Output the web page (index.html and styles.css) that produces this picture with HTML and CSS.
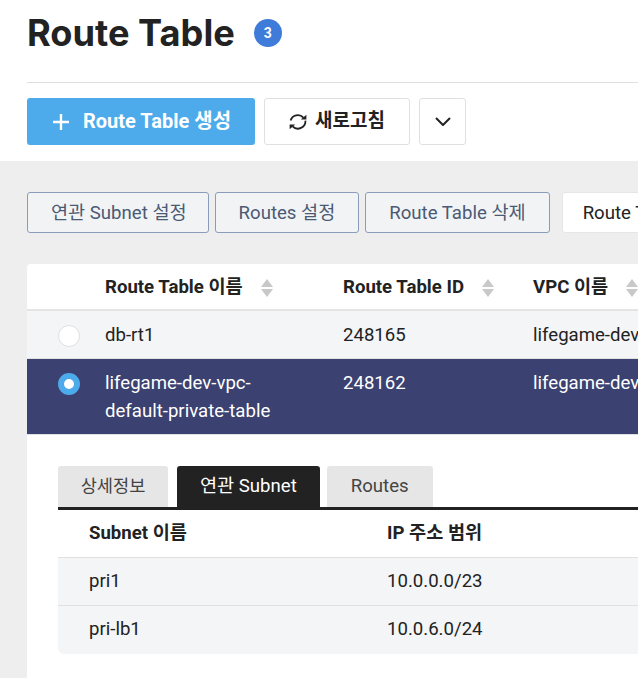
FILE: index.html
```html
<!DOCTYPE html>
<html lang="ko">
<head>
  <meta charset="UTF-8">
  <meta name="viewport" content="width=device-width, initial-scale=1.0">
  <title>Route Table</title>
  <link rel="stylesheet" href="styles.css">
</head>
<body>
  <!-- Page header -->
  <div class="page-header">
    <div class="title-row">
      <h1 class="page-title">Route Table</h1>
      <span class="count-badge">3</span>
    </div>
    <div class="toolbar">
      <button class="create-button">
        <svg class="plus-icon" width="18" height="18" viewBox="0 0 18 18"><path d="M9 1v16M1 9h16" fill="none" stroke="#fff" stroke-width="2.4"/></svg>
        Route Table 생성
      </button>
      <button class="refresh-button">
        <svg width="18" height="18" viewBox="0 0 18 18"><path d="M1.6 7.6A7.5 7.5 0 0 1 14.4 4.6" fill="none" stroke="#222" stroke-width="1.8"/><path d="M16.4 7.6A7.5 7.5 0 0 1 3.6 13.4" fill="none" stroke="#222" stroke-width="1.8"/><path d="M11.8 6.6h5.6V1.8z" fill="#222"/><path d="M6.2 11.4H.6v4.8z" fill="#222"/></svg>
        새로고침
      </button>
      <button class="more-button">
        <svg width="16" height="9" viewBox="0 0 16 9"><path d="M1 1l7 7 7-7" fill="none" stroke="#222" stroke-width="2"/></svg>
      </button>
    </div>
  </div>

  <!-- Content -->
  <div class="content">
    <div class="actions">
      <button class="action-button action-first">연관 Subnet 설정</button>
      <button class="action-button">Routes 설정</button>
      <button class="action-button">Route Table 삭제</button>
      <button class="action-button action-white">Route Table 이름 변경</button>
    </div>

    <div class="card">
      <table class="route-table">
        <colgroup>
          <col class="col-radio"><col class="col-name"><col class="col-id"><col class="col-vpc">
        </colgroup>
        <thead>
          <tr>
            <th></th>
            <th>Route Table 이름<span class="sort"></span></th>
            <th>Route Table ID<span class="sort"></span></th>
            <th>VPC 이름<span class="sort"></span></th>
          </tr>
        </thead>
        <tbody>
          <tr>
            <td><span class="radio"></span></td>
            <td>db-rt1</td>
            <td>248165</td>
            <td>lifegame-dev-vpc</td>
          </tr>
          <tr class="selected">
            <td><span class="radio radio-on"></span></td>
            <td>lifegame-dev-vpc-<br>default-private-table</td>
            <td>248162</td>
            <td>lifegame-dev-vpc</td>
          </tr>
        </tbody>
      </table>

      <div class="detail">
        <div class="tabs">
          <div class="tab tab-first">상세정보</div>
          <div class="tab tab-active">연관 Subnet</div>
          <div class="tab">Routes</div>
        </div>
        <table class="subnet-table">
          <colgroup><col class="col-subnet"><col class="col-ip"></colgroup>
          <thead>
            <tr><th>Subnet 이름</th><th>IP 주소 범위</th></tr>
          </thead>
          <tbody>
            <tr><td>pri1</td><td>10.0.0.0/23</td></tr>
            <tr><td>pri-lb1</td><td>10.0.6.0/24</td></tr>
          </tbody>
        </table>
      </div>
    </div>
  </div>
</body>
</html>
```

FILE: styles.css
```css
body {
  font-family: Roboto, "Noto Sans CJK KR", sans-serif;
  margin: 0;
  width: 638px;
  height: 678px;
  overflow: hidden;
  background-color: #eeeeee;
  color: #222;
}
button {
  font-family: inherit;
  cursor: pointer;
}
.page-header {
  background-color: #fff;
  height: 161px;
  padding-left: 27px;
  box-sizing: border-box;
}
.title-row {
  display: flex;
  align-items: center;
  height: 82px;
  border-bottom: 1px solid #e0e0e0;
  margin-bottom: 15px;
}
.page-title {
  font-family: Inter, sans-serif;
  font-size: 36.2px;
  font-weight: 700;
  margin: -16px 0 0;
}
.count-badge {
  width: 28px;
  height: 28px;
  margin: -16px 0 0 19px;
  border-radius: 50%;
  background-color: #3f7bd9;
  color: #fff;
  font-size: 14px;
  font-weight: 700;
  line-height: 28px;
  text-align: center;
}
.toolbar {
  display: flex;
  height: 47px;
}
.create-button {
  display: flex;
  align-items: center;
  width: 228px;
  padding: 0 0 2px 25px;
  border: none;
  border-radius: 3px;
  background-color: #4daaeb;
  color: #fff;
  font-size: 20px;
  line-height: 28px;
  font-weight: 700;
}
.plus-icon {
  margin: 3px 13px 0 0;
}
.refresh-button, .more-button {
  display: flex;
  align-items: center;
  justify-content: center;
  background-color: #fff;
  border: 1px solid #e0e0e0;
  border-radius: 3px;
  color: #222;
}
.refresh-button {
  width: 146px;
  margin-left: 9px;
  padding: 0 0 2px;
  gap: 8px;
  font-size: 19px;
  line-height: 28px;
  font-weight: 700;
}
.refresh-button svg {
  margin-top: 2px;
}
.more-button {
  width: 47px;
  margin-left: 9px;
}
.content {
  padding: 31px 0 0 27px;
}
.actions {
  display: flex;
  gap: 6px;
  width: 800px;
  margin-bottom: 31px;
}
.action-button {
  height: 41px;
  padding: 0 23px;
  background-color: #f2f3f5;
  border: 1px solid #8b9cba;
  border-radius: 3px;
  color: #4a5a75;
  font-size: 18.6px;
  line-height: 28px;
  white-space: nowrap;
}
.action-first {
  padding-right: 21px;
}
.action-white {
  margin-left: 6px;
  padding: 0 20px;
  background-color: #fff;
  border-color: #e6e6e6;
  color: #222;
}
.card {
  width: 800px;
  height: 500px;
  background-color: #fff;
  border-radius: 4px 0 0 0;
}
.route-table, .subnet-table {
  border-collapse: separate;
  border-spacing: 0;
  table-layout: fixed;
  font-size: 18.6px;
  line-height: 28px;
}
.route-table {
  width: 800px;
}
.col-radio { width: 78px; }
.col-name { width: 238px; }
.col-id { width: 190px; }
.route-table th {
  height: 47px;
  padding: 0;
  box-sizing: border-box;
  text-align: left;
  font-weight: 700;
  border-bottom: 2px solid #e4e4e4;
}
.route-table td {
  height: 48px;
  padding: 10px 0 0;
  box-sizing: border-box;
  vertical-align: top;
  background-color: #f4f5f7;
  border-bottom: 1px solid #e0e0e0;
}
.route-table td:first-child {
  padding: 15px 0 0 31px;
}
.route-table .selected td {
  height: 76px;
  background-color: #3b4170;
  color: #fff;
}
.sort {
  display: inline-block;
  position: relative;
  width: 12px;
  height: 18px;
  margin-left: 18px;
  vertical-align: middle;
}
.sort::before, .sort::after {
  content: "";
  position: absolute;
  left: 0;
  border-left: 6px solid transparent;
  border-right: 6px solid transparent;
}
.sort::before {
  top: 0;
  border-bottom: 8px solid #c8c8c8;
}
.sort::after {
  bottom: 0;
  border-top: 8px solid #c8c8c8;
}
.radio {
  display: block;
  width: 22px;
  height: 22px;
  box-sizing: border-box;
  background-color: #fff;
  border: 1px solid #e0e0e0;
  border-radius: 50%;
  margin-top: -1px;
}
.radio-on {
  border: 6.5px solid #4daaeb;
}
.detail {
  padding: 31px 0 0 31px;
}
.tabs {
  display: flex;
  align-items: flex-end;
  height: 41px;
  gap: 7px;
  border-bottom: 3px solid #222;
}
.tab {
  height: 41px;
  padding: 0 24px;
  background-color: #e6e6e6;
  border-radius: 3px 3px 0 0;
  color: #444;
  font-size: 18.6px;
  line-height: 40px;
  text-align: center;
}
.tab-first {
  box-sizing: border-box;
  width: 110px;
  padding: 0;
  font-size: 17.6px;
}
.tab-active {
  margin-left: 2px;
  padding: 0 23px;
  background-color: #222;
  color: #fff;
}
.subnet-table {
  width: 769px;
}
.col-subnet { width: 329px; }
.subnet-table th {
  height: 48px;
  padding: 0 0 1px 31px;
  box-sizing: border-box;
  text-align: left;
  font-weight: 700;
  border-bottom: 1px solid #e0e0e0;
}
.subnet-table th + th, .subnet-table td + td {
  padding-left: 0;
}
.subnet-table td {
  height: 48px;
  padding: 0 0 2px 31px;
  box-sizing: border-box;
  background-color: #f4f5f7;
  border-bottom: 1px solid #e0e0e0;
}
.subnet-table tr:last-child td {
  border-bottom: none;
}
.subnet-table tr:last-child td:first-child {
  border-radius: 0 0 0 6px;
}
```
